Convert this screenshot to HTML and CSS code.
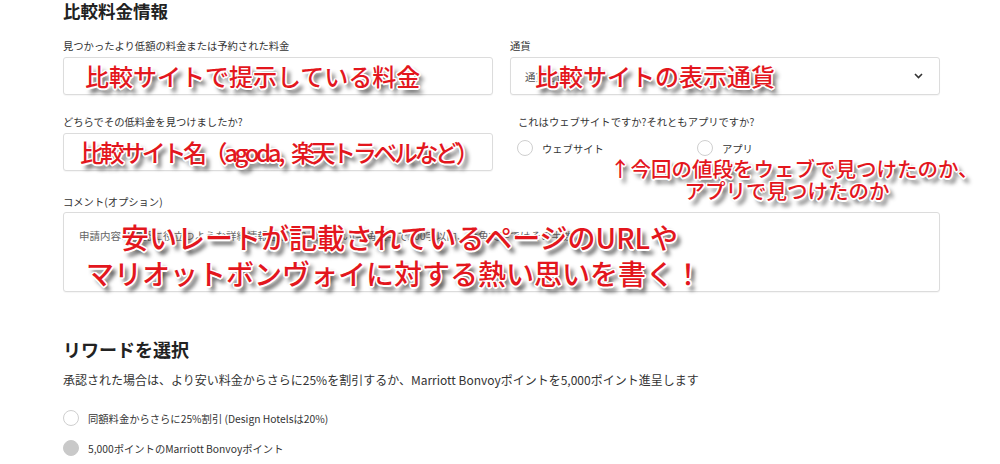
FILE: index.html
```html
<!DOCTYPE html>
<html lang="ja">
<head>
<meta charset="utf-8">
<title>比較料金情報</title>
<link rel="stylesheet" href="styles.css">
</head>
<body>
<main class="page">
  <h2 class="title">比較料金情報</h2>
  <div class="grid">
    <div class="field">
      <div class="label">見つかったより低額の料金または予約された料金</div>
      <div class="box input">
        <span class="note note-mid">比較サイトで提示している料金</span>
      </div>
    </div>
    <div class="field">
      <div class="label">通貨</div>
      <div class="box select">
        <span class="placeholder">通貨を選択</span>
        <svg class="chev" width="9" height="6" viewBox="0 0 9 6"><polyline points="1,1 4.5,4.5 8,1" fill="none" stroke="#333" stroke-width="1.6"/></svg>
        <span class="note note-mid note-cur">比較サイトの表示通貨</span>
      </div>
    </div>
    <div class="field">
      <div class="label">どちらでその低料金を見つけましたか?</div>
      <div class="box input">
        <span class="note note-mid note-site">比較サイト名（agoda, 楽天トラベルなど）</span>
      </div>
    </div>
    <div class="field radio-field">
      <div class="label indent">これはウェブサイトですか?それともアプリですか?</div>
      <div class="radios">
        <label class="radio web"><span class="circle"></span>ウェブサイト</label>
        <label class="radio"><span class="circle"></span>アプリ</label>
      </div>
      <div class="note note-app">↑今回の値段をウェブで見つけたのか、<br>アプリで見つけたのか</div>
    </div>
  </div>
  <div class="field comment">
    <div class="label">コメント(オプション)</div>
    <div class="box textarea">
      <span class="placeholder">申請内容の確認に役立つような詳細情報をご記入ください(半角文字で200字以内、全角文字ではその半数)。</span>
      <div class="note note-big">
        <span class="l1">安いレートが記載されているページのURLや</span>
        <span class="l2">マリオットボンヴォイに対する熱い思いを書く！</span>
      </div>
    </div>
  </div>
  <h2 class="title reward">リワードを選択</h2>
  <p class="desc">承認された場合は、より安い料金からさらに25%を割引するか、Marriott Bonvoyポイントを5,000ポイント進呈します</p>
  <label class="option"><span class="circle"></span>同額料金からさらに25%割引 (Design Hotelsは20%)</label>
  <label class="option second"><span class="circle filled"></span>5,000ポイントのMarriott Bonvoyポイント</label>
</main>
</body>
</html>
```

FILE: styles.css
```css
html, body {
  margin: 0;
  padding: 0;
  background: #fff;
}
body {
  font-family: "Noto Sans CJK JP", "Noto Sans", sans-serif;
  color: #333;
  width: 1000px;
  height: 464px;
  overflow: hidden;
}
.page {
  padding: 0 0 0 63px;
  width: 877px;
}
.title {
  margin: 0;
  font-size: 17.5px;
  line-height: 22px;
  font-weight: 700;
  color: #222;
}
.grid {
  margin-top: 16px;
  display: grid;
  grid-template-columns: 430px 430px;
  column-gap: 17px;
  row-gap: 19px;
}
.field {
  position: relative;
}
.label {
  font-size: 10.3px;
  line-height: 15px;
  color: #333;
  margin-bottom: 4px;
  white-space: nowrap;
}
.label.indent {
  padding-left: 8px;
}
.box {
  position: relative;
  box-sizing: border-box;
  border: 1px solid #dcdcdc;
  border-radius: 3px;
  background: #fff;
  box-shadow: 0 1px 1px rgba(0,0,0,0.04);
}
.input, .select {
  height: 38px;
}
.select {
  display: flex;
  align-items: center;
  justify-content: space-between;
  padding: 0 16px 0 14px;
}
.placeholder {
  font-size: 10.5px;
  color: #555;
  white-space: nowrap;
}
.chev {
  display: block;
}
.radios {
  display: flex;
  margin-top: 11px;
  padding-left: 7px;
}
.radio {
  display: flex;
  align-items: center;
  font-size: 10.3px;
  color: #333;
  gap: 9px;
}
.radio.web {
  width: 180px;
}
.circle {
  width: 16px;
  height: 16px;
  box-sizing: border-box;
  border: 1px solid #cfcfcf;
  border-radius: 50%;
  background: #fff;
  flex: none;
}
.circle.filled {
  background: #c9c9c9;
  border-color: #c9c9c9;
}
.comment {
  margin-top: 23px;
}
.comment .label {
  margin-bottom: 3px;
}
.textarea {
  height: 80px;
  padding: 8px 15px;
}
.textarea .placeholder {
  font-size: 10.5px;
  line-height: 15px;
  color: #666;
}
.reward {
  margin-top: 45px;
  font-size: 18px;
  line-height: 24px;
}
.desc {
  margin: 10px 0 0;
  font-size: 12px;
  line-height: 18px;
  color: #333;
  white-space: nowrap;
}
.option {
  display: flex;
  align-items: center;
  gap: 9px;
  height: 20px;
  margin-top: 19px;
  font-size: 10.3px;
  color: #333;
}
.option.second {
  margin-top: 10px;
}

/* annotations overlaid on the screenshot */
.note {
  position: absolute;
  color: #e3161d;
  font-family: "Noto Sans CJK JP", sans-serif;
  font-weight: 500;
  white-space: nowrap;
  text-shadow:
    1.5px 0 0 #fff, -1.5px 0 0 #fff, 0 1.5px 0 #fff, 0 -1.5px 0 #fff,
    1.2px 1.2px 0 #fff, -1.2px 1.2px 0 #fff, 1.2px -1.2px 0 #fff, -1.2px -1.2px 0 #fff,
    4px 5px 4px #3a3a3a;
}
.note-mid {
  top: 0;
  bottom: 0;
  left: 21px;
  display: flex;
  align-items: center;
  font-size: 24px;
  line-height: 30px;
}
.note-cur {
  left: 24px;
}
.note-site {
  left: 16px;
  font-size: 24px;
  letter-spacing: -3.4px;
  word-spacing: 7px;
}
.note-app {
  left: 100px;
  top: 43px;
  width: 354px;
  text-align: center;
  font-size: 20.5px;
  line-height: 22px;
}
.note-big {
  top: 6px;
  left: 22px;
  font-size: 28px;
  line-height: 36px;
}
.note-big span {
  display: block;
}
.note-big .l1 {
  padding-left: 35px;
}
```
